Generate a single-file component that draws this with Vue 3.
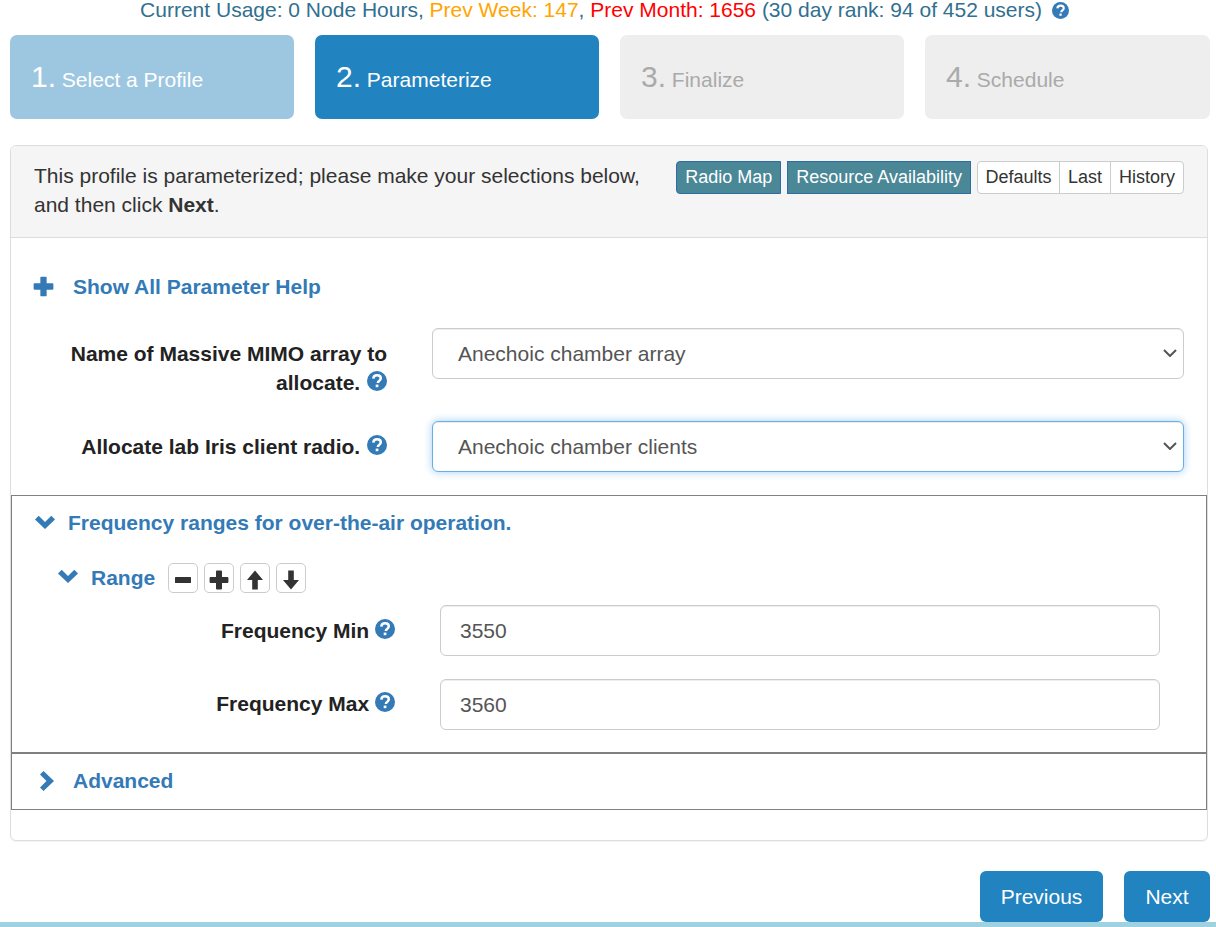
<template>
  <div class="page">
    <svg class="defs" width="0" height="0" aria-hidden="true">
      <symbol id="i-help" viewBox="0 0 20 20">
        <circle cx="10" cy="10" r="10" fill="currentColor" />
        <path d="M6.300 7.600C6.500 5.400 8 4.300 10.100 4.300c2.200 0 3.700 1.200 3.700 3 0 1.300-.7 2-1.700 2.700-.9.6-1.200 1-1.200 2" fill="none" stroke="#fff" stroke-width="2.500" />
        <rect x="8.700" y="13.600" width="2.700" height="2.600" fill="#fff" />
      </symbol>
      <symbol id="i-plus" viewBox="0 0 20 20">
        <path d="M7 1.500c0-.5.4-.9.9-.9h4.200c.5 0 .9.4.9.9V7h5.500c.5 0 .9.4.9.9v4.200c0 .5-.4.9-.9.9H13v5.500c0 .5-.4.9-.9.9H7.900c-.5 0-.9-.4-.9-.9V13H1.500c-.5 0-.9-.4-.9-.9V7.900c0-.5.4-.9.9-.9H7z" fill="currentColor" />
      </symbol>
      <symbol id="i-minus" viewBox="0 0 20 20">
        <rect x="2" y="7" width="16" height="6" rx=".6" fill="currentColor" />
      </symbol>
      <symbol id="i-down" viewBox="0 0 20 14">
        <path d="M0 4.500 3.700.8 10 7.100 16.300.8 20 4.500 10 14z" fill="currentColor" />
      </symbol>
      <symbol id="i-right" viewBox="0 0 14 20">
        <path d="M3.500 0 14 10 3.500 20 0 16.500 6.500 10 0 3.500z" fill="currentColor" />
      </symbol>
      <symbol id="i-up-arrow" viewBox="0 0 20 20">
        <path d="M10 .5 18 10H12.800V19.500H7.200V10H2z" fill="currentColor" />
      </symbol>
      <symbol id="i-down-arrow" viewBox="0 0 20 20">
        <path d="M7.200 .5H12.800V10H18L10 19.500 2 10H7.200z" fill="currentColor" />
      </symbol>
    </svg>

    <div class="usage">
      Current Usage: 0 Node Hours,
      <span class="week">Prev Week: 147</span>,
      <span class="month">Prev Month: 1656</span>
      (30 day rank: 94 of 452 users)
      <svg class="help small"><use href="#i-help" /></svg>
    </div>

    <div class="steps">
      <div v-for="s in steps" :key="s.num" class="step" :class="s.state">
        <span class="num">{{ s.num }}.</span> {{ s.label }}
      </div>
    </div>

    <div class="panel">
      <div class="panel-head">
        <div class="intro">This profile is parameterized; please make your selections below, and then click <b>Next</b>.</div>
        <div class="head-btns">
          <button class="btn-teal rounded-left">Radio Map</button>
          <button class="btn-teal">Resource Availability</button>
          <div class="btn-group">
            <button>Defaults</button>
            <button>Last</button>
            <button>History</button>
          </div>
        </div>
      </div>

      <div class="panel-body">
        <div class="show-help">
          <svg class="plus"><use href="#i-plus" /></svg>
          <a>Show All Parameter Help</a>
        </div>

        <div class="form-row first">
          <label>Name of Massive MIMO array to allocate. <svg class="help"><use href="#i-help" /></svg></label>
          <div class="select-wrap">
            <select>
              <option>Anechoic chamber array</option>
            </select>
            <svg class="caret" viewBox="0 0 14 8"><path d="M1 1l6 6 6-6" /></svg>
          </div>
        </div>
        <div class="form-row second">
          <label>Allocate lab Iris client radio. <svg class="help"><use href="#i-help" /></svg></label>
          <div class="select-wrap">
            <select class="focused">
              <option>Anechoic chamber clients</option>
            </select>
            <svg class="caret" viewBox="0 0 14 8"><path d="M1 1l6 6 6-6" /></svg>
          </div>
        </div>

        <div class="group freq">
          <div class="group-title">
            <svg class="chev-down"><use href="#i-down" /></svg>
            <a>Frequency ranges for over-the-air operation.</a>
          </div>
          <div class="range-head">
            <svg class="chev-down"><use href="#i-down" /></svg>
            <a>Range</a>
            <div class="range-btns">
              <button v-for="b in rangeBtns" :key="b"><svg><use :href="'#' + b" /></svg></button>
            </div>
          </div>
          <div v-for="f in freqs" :key="f.label" class="freq-row">
            <label>{{ f.label }} <svg class="help"><use href="#i-help" /></svg></label>
            <input type="text" :value="f.value" />
          </div>
        </div>

        <div class="group advanced">
          <svg class="chev-right"><use href="#i-right" /></svg>
          <a>Advanced</a>
        </div>
      </div>
    </div>

    <div class="actions">
      <button>Previous</button>
      <button>Next</button>
    </div>
    <div class="footer-bar"></div>
  </div>
</template>

<script setup>
const steps = [
  { num: 1, label: 'Select a Profile', state: 'done' },
  { num: 2, label: 'Parameterize', state: 'active' },
  { num: 3, label: 'Finalize', state: 'todo' },
  { num: 4, label: 'Schedule', state: 'todo' },
]

const rangeBtns = ['i-minus', 'i-plus', 'i-up-arrow', 'i-down-arrow']

const freqs = [
  { label: 'Frequency Min', value: '3550' },
  { label: 'Frequency Max', value: '3560' },
]
</script>

<style>
html, body {
  background: #fff;
}
</style>

<style scoped>
.page {
  width: 1216px;
  height: 927px;
  overflow: hidden;
  font-family: "Liberation Sans", Arial, sans-serif;
  font-size: 21px;
  line-height: 29px;
  color: #333;
  background: #fff;
}
.defs {
  position: absolute;
}
a {
  color: #337ab7;
  font-weight: 700;
}
button {
  font-family: inherit;
  cursor: pointer;
}

.usage {
  height: 20px;
  line-height: 20px;
  margin-bottom: 15px;
  text-align: center;
  color: #31708f;
  padding-right: 7px;
}
.week {
  color: #ffa500;
}
.month {
  color: #f00;
}
.help {
  width: 20px;
  height: 20px;
  color: #337ab7;
  vertical-align: -1px;
  margin-left: 1px;
}
.help.small {
  width: 17px;
  height: 17px;
  vertical-align: -2px;
  margin-left: 4px;
}

.steps {
  display: grid;
  grid-template-columns: 284px 284px 284px 285px;
  gap: 21px;
  margin: 0 6px 26px 10px;
}
.step {
  height: 84px;
  line-height: 84px;
  padding-left: 21px;
  border-radius: 7px;
  white-space: nowrap;
}
.num {
  font-size: 30px;
}
.step.done {
  background: #9dc7e1;
  color: #fff;
}
.step.active {
  background: #2183bf;
  color: #fff;
}
.step.todo {
  background: #eee;
  color: #aaa;
}

.panel {
  margin: 0 8px 30px 10px;
  border: 1px solid #ddd;
  border-radius: 6px;
  box-shadow: 0 1px 1px rgba(0, 0, 0, .05);
}
.panel-head {
  display: flex;
  justify-content: space-between;
  height: 92px;
  box-sizing: border-box;
  padding: 15px 23px 0;
  background: #f5f5f5;
  border-bottom: 1px solid #ddd;
  border-radius: 5px 5px 0 0;
}
.intro {
  width: 620px;
}
.head-btns {
  display: flex;
  gap: 6px;
  height: 33px;
}
.head-btns button {
  height: 33px;
  padding: 0 8px;
  font-size: 18px;
  line-height: 31px;
  white-space: nowrap;
}
.btn-teal {
  background: #4a8797;
  color: #fff;
  border: 1px solid #2e6da4;
}
.rounded-left {
  border-radius: 4px 0 0 4px;
}
.btn-group {
  display: flex;
}
.head-btns .btn-group button {
  background: #fff;
  color: #333;
  border: 1px solid #ccc;
  margin-left: -1px;
}
.head-btns .btn-group button:first-child {
  width: 83px;
  padding: 0;
  margin-left: 0;
  border-radius: 4px 0 0 4px;
}
.head-btns .btn-group button:nth-child(2) {
  width: 52px;
  padding: 0;
}
.head-btns .btn-group button:last-child {
  width: 74px;
  padding: 0;
  border-radius: 0 4px 4px 0;
}

.panel-body {
  padding: 34px 0 30px;
}
.show-help {
  display: flex;
  align-items: center;
  height: 28px;
  margin-bottom: 28px;
  padding-left: 22px;
}
.plus {
  width: 21px;
  height: 21px;
  color: #337ab7;
  margin-right: 19px;
}

.form-row {
  display: grid;
  grid-template-columns: 376px 752px;
  column-gap: 45px;
  align-items: start;
}
.form-row.first {
  margin-bottom: 24px;
}
.form-row.second {
  margin-bottom: 23px;
}
label {
  display: block;
  text-align: right;
  font-weight: 700;
  color: #222;
}
.form-row label {
  padding: 11px 0 0 50px;
}
.select-wrap {
  position: relative;
  height: 51px;
}
.caret {
  position: absolute;
  right: 7px;
  top: 21px;
  width: 14px;
  height: 8px;
  fill: none;
  stroke: #555;
  stroke-width: 2;
  pointer-events: none;
}
select,
input {
  display: block;
  box-sizing: border-box;
  height: 51px;
  font-family: inherit;
  font-size: 21px;
  color: #555;
  background-color: #fff;
  border: 1px solid #ccc;
  border-radius: 6px;
  box-shadow: inset 0 1px 1px rgba(0, 0, 0, .075);
  outline: none;
}
select {
  width: 752px;
  padding: 0 24px 0 25px;
  appearance: none;
}
select.focused {
  border-color: #66afe9;
  box-shadow: inset 0 1px 1px rgba(0, 0, 0, .075), 0 0 8px rgba(102, 175, 233, .6);
}
input {
  width: 720px;
  padding: 0 19px;
}

.group {
  border: 1px solid #808080;
}
.freq {
  height: 258px;
  box-sizing: border-box;
  padding-top: 12px;
}
.chev-down {
  width: 20px;
  height: 14px;
  color: #337ab7;
  flex: none;
}
.group-title {
  display: flex;
  align-items: center;
  height: 28px;
  padding-left: 23px;
  gap: 13px;
}
.range-head {
  display: flex;
  align-items: center;
  height: 30px;
  margin-top: 27px;
  padding-left: 46px;
  gap: 13px;
}
.range-head .chev-down {
  margin-top: -4px;
}
.range-head a {
  margin-top: -2px;
}
.range-btns {
  display: flex;
  gap: 6px;
}
.range-btns button {
  width: 30px;
  height: 30px;
  padding: 0;
  display: flex;
  align-items: center;
  justify-content: center;
  background: #fff;
  color: #333;
  border: 1px solid #ccc;
  border-radius: 5px;
}
.range-btns svg {
  width: 20px;
  height: 20px;
  transform: translateY(2px);
}
.freq-row {
  display: grid;
  grid-template-columns: 383px 720px;
  column-gap: 45px;
  margin-top: 23px;
}
.range-head + .freq-row {
  margin-top: 12px;
}
.freq-row label {
  padding-top: 10px;
}
.range-head + .freq-row label {
  padding-top: 11px;
}
.freq-row .help {
  margin-left: 0;
}

.advanced {
  display: flex;
  align-items: center;
  height: 57px;
  box-sizing: border-box;
  padding-left: 27px;
  padding-bottom: 1px;
  gap: 18px;
}
.advanced a {
  margin-top: -1px;
}
.chev-right {
  width: 16px;
  height: 20px;
  color: #337ab7;
}

.actions {
  display: flex;
  justify-content: flex-end;
  gap: 21px;
  margin-right: 6px;
}
.actions button {
  width: 86px;
  height: 51px;
  padding: 0;
  font-size: 21px;
  color: #fff;
  background: #2183bf;
  border: none;
  border-radius: 6px;
}
.actions button:first-child {
  width: 123px;
}
.footer-bar {
  height: 5px;
  background: #9fd2e0;
}
</style>
